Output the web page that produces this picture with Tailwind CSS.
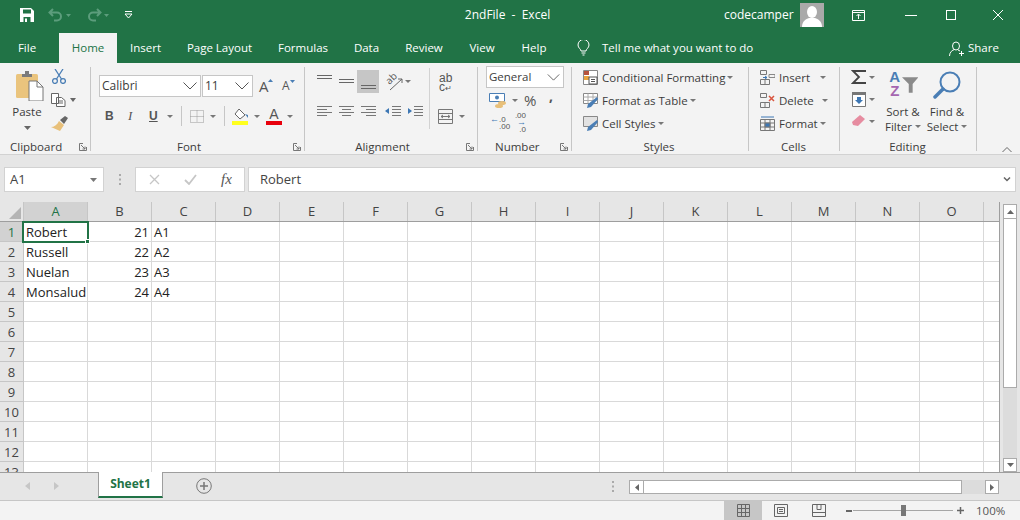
<!DOCTYPE html>
<html lang="en">
<head>
<meta charset="UTF-8" />
<title>2ndFile - Excel</title>
<script src="https://cdn.jsdelivr.net/npm/@tailwindcss/browser@4"></script>
</head>
<body class="w-[1020px] h-[520px] overflow-hidden bg-[#e6e6e6] font-['Open_Sans',sans-serif] text-[#333]">

<!-- Title bar -->
<header class="h-[30px] bg-[#217346] flex items-center text-white">
  <svg class="ml-[20px] w-[14px] h-[14px]" viewBox="0 0 14 14"><path d="M0 0h11l3 3v11H0z" fill="#fff"/><path d="M3 1.500h8v4H3zM3.500 9h7v5h-7z" fill="#217346"/><path d="M5 10.500h2V14H5z" fill="#fff"/></svg>
  <svg class="ml-[14px] w-[16px] h-[14px]" viewBox="0 0 16 14" fill="none" stroke="#5c9d7c" stroke-width="2"><path d="M5 1L1.500 4.500 5 8M2 4.500h7a4 4 0 0 1 0 8H6"/></svg>
  <svg class="ml-[2px] w-[5px] h-[3px]" viewBox="0 0 5 3"><path d="M0 0h5L2.500 3z" fill="#5c9d7c"/></svg>
  <svg class="ml-[15px] w-[16px] h-[14px]" viewBox="0 0 16 14" fill="none" stroke="#5c9d7c" stroke-width="2"><path d="M11 1l3.500 3.500L11 8M14 4.500H7a4 4 0 0 0 0 8h3"/></svg>
  <svg class="ml-[2px] w-[5px] h-[3px]" viewBox="0 0 5 3"><path d="M0 0h5L2.500 3z" fill="#5c9d7c"/></svg>
  <svg class="ml-[15px] w-[9px] h-[8px]" viewBox="0 0 9 8"><path d="M1 .5h7" stroke="#fff"/><path d="M1 3h7L4.500 7z" fill="none" stroke="#fff"/></svg>
  <div class="w-[343px] ml-[203px] text-center text-[12px]">2ndFile&nbsp; -&nbsp; Excel</div>
  <div class="w-[65px] ml-[45px] text-[12px] whitespace-nowrap">codecamper</div>
  <div class="ml-[11px] w-[24px] h-[24px] bg-[#a9a9a9] overflow-hidden">
    <svg class="w-[24px] h-[24px]" viewBox="0 0 24 24"><ellipse cx="12" cy="9" rx="5" ry="6" fill="#fff"/><path d="M2 24c0-6 4-8 7-9h6c3 1 7 3 7 9z" fill="#fff"/></svg>
  </div>
  <svg class="ml-[28px] w-[13px] h-[11px]" viewBox="0 0 13 11" fill="none" stroke="#fff"><path d="M.5.500h12v10H.500zM.5 2.500h12M6.500 9V4.500M4.500 6l2-2 2 2"/></svg>
  <div class="ml-[40px] w-[12px] h-px bg-white"></div>
  <div class="ml-[29px] w-[10px] h-[10px] border border-white"></div>
  <svg class="ml-[36px] w-[12px] h-[12px]" viewBox="0 0 12 12" stroke="#fff"><path d="M1 1l10 10M11 1L1 11"/></svg>
</header>

<!-- Tabs -->
<nav class="h-[33px] bg-[#217346] flex items-end text-white text-[11.500px] leading-[30px]">
  <div class="w-[54px] text-center h-[30px]">File</div>
  <div class="ml-[5px] w-[58px] text-center h-[30px] bg-[#f3f3f3] text-[#217346]">Home</div>
  <div class="w-[57px] text-center h-[30px]">Insert</div>
  <div class="w-[91px] text-center h-[30px]">Page Layout</div>
  <div class="w-[76px] text-center h-[30px]">Formulas</div>
  <div class="w-[51px] text-center h-[30px]">Data</div>
  <div class="w-[64px] text-center h-[30px]">Review</div>
  <div class="w-[52px] text-center h-[30px]">View</div>
  <div class="w-[52px] text-center h-[30px]">Help</div>
  <div class="h-[30px] flex items-center ml-[17px]">
    <svg class="w-[13px] h-[16px]" viewBox="0 0 13 16" fill="none" stroke="#fff"><path d="M4 11c0-2-3-3-3-6a5.500 5.500 0 0 1 11 0c0 3-3 4-3 6zM4.500 13h4M5.500 15h2"/></svg>
    <span class="ml-[12px] w-[150px] whitespace-nowrap">Tell me what you want to do</span>
  </div>
  <div class="h-[30px] flex items-center ml-[197px]">
    <svg class="w-[15px] h-[15px]" viewBox="0 0 15 15" fill="none" stroke="#fff"><ellipse cx="7" cy="5" rx="3.500" ry="4"/><path d="M.5 15c0-4 3-6 5-6.500M9 9l2 1M10 12.500h5M12.500 10v5"/></svg>
    <span class="ml-[4px]">Share</span>
  </div>
</nav>

<!-- Ribbon -->
<section class="h-[92px] bg-[#f3f3f3] border-b border-[#d2d2d2] flex items-start pt-[4px] text-[11.500px] leading-[16px] text-[#3c3c3c]">

  <!-- Clipboard -->
  <div class="w-[91px] h-[84px] border-r border-[#c6c6c6] flex flex-col">
    <div class="h-[70px] flex">
      <div class="w-[50px] flex flex-col items-center">
        <svg class="mt-[4px] ml-[8px] w-[29px] h-[30px]" viewBox="0 0 29 30"><rect x="1" y="3" width="22" height="24" rx="1.500" fill="#eac47d"/><path d="M7 3h3V0h4v3h3v3H7z" fill="#7b7b7b"/><path d="M14 10h8l6 6v14H14z" fill="#fff" stroke="#777"/><path d="M22 10v6h6" fill="none" stroke="#777"/></svg>
        <span class="mt-[3px] ml-[4px]">Paste</span>
        <svg class="mt-[6px] ml-[4px] w-[7px] h-[4px]" viewBox="0 0 7 4"><path d="M0 0h7L3.500 4z" fill="#666"/></svg>
      </div>
      <div class="flex flex-col">
        <svg class="mt-[2px] ml-[2px] w-[14px] h-[15px]" viewBox="0 0 14 15" fill="none" stroke="#4a7eb5" stroke-width="1.300"><path d="M3 0l6.500 10M11 0L4.500 10"/><circle cx="3" cy="12" r="2.400"/><circle cx="11" cy="12" r="2.400"/></svg>
        <div class="mt-[9px] flex items-center">
          <svg class="ml-[1px] w-[15px] h-[14px]" viewBox="0 0 15 14" fill="#fff" stroke="#666"><path d="M.5.500h7v10h-7zM5.500 4.500h5l3.500 3v6h-8.500z"/><path d="M7 8h5M7 10h5" /></svg>
          <svg class="ml-[4px] w-[6px] h-[4px]" viewBox="0 0 6 4"><path d="M0 0h6L3 4z" fill="#666"/></svg>
        </div>
        <svg class="mt-[9px] w-[18px] h-[15px]" viewBox="0 0 18 15"><path d="M9 5l5 4-4 6-9-4c3 0 6-2 8-6z" fill="#e8c07a"/><path d="M10 4l5-4 3 2-4 6z" fill="#666"/></svg>
      </div>
    </div>
    <div class="mt-[3px] flex items-center pl-[10px] leading-[14px] -mb-[3px]">
      <span class="w-[69px]">Clipboard</span>
      <svg class="w-[8px] h-[8px]" viewBox="0 0 8 8" fill="none" stroke="#777"><path d="M7.500 4v3.500H.5V.5H4M2 2l4 4M6 3.500V6H3.500"/></svg>
    </div>
  </div>

  <!-- Font -->
  <div class="w-[214px] h-[84px] border-r border-[#c6c6c6] flex flex-col">
    <div class="mt-[8px] h-[22px] flex items-center text-[12px]">
      <div class="ml-[8px] w-[102px] h-[22px] bg-white border border-[#c6c6c6] flex items-center justify-between px-[2px]">
        <span>Calibri</span>
        <svg class="mr-[1px] w-[14px] h-[8px]" viewBox="0 0 14 8" fill="none" stroke="#555"><path d="M.5.500L7 7l6.500-6.500"/></svg>
      </div>
      <div class="ml-[1px] w-[51px] h-[22px] bg-white border border-[#c6c6c6] flex items-center justify-between px-[2px]">
        <span>11</span>
        <svg class="mr-[1px] w-[14px] h-[8px]" viewBox="0 0 14 8" fill="none" stroke="#555"><path d="M.5.500L7 7l6.500-6.500"/></svg>
      </div>
      <div class="ml-[6px] w-[14px] text-[15px] text-[#555] leading-none flex items-start">A<svg class="-ml-[1px] w-[5px] h-[3px]" viewBox="0 0 5 3"><path d="M0 3h5L2.500 0z" fill="#4a7eb5"/></svg></div>
      <div class="ml-[9px] w-[14px] text-[12px] text-[#555] leading-none flex items-start">A<svg class="w-[5px] h-[3px]" viewBox="0 0 5 3"><path d="M0 0h5L2.500 3z" fill="#4a7eb5"/></svg></div>
    </div>
    <div class="mt-[10px] h-[18px] flex items-center text-[#555]">
      <span class="ml-[14px] w-[9px] font-bold text-[12px] font-['Liberation_Sans',sans-serif]">B</span>
      <span class="ml-[14px] w-[8px] italic text-[13px] font-['Liberation_Serif',serif]">I</span>
      <span class="ml-[13px] w-[9px] underline font-bold text-[12px] font-['Liberation_Sans',sans-serif]">U</span>
      <svg class="ml-[9px] w-[6px] h-[3px]" viewBox="0 0 6 3"><path d="M0 0h6L3 3z" fill="#777"/></svg>
      <div class="ml-[8px] w-px h-[20px] bg-[#c6c6c6]"></div>
      <svg class="ml-[8px] w-[14px] h-[13px]" viewBox="0 0 14 13" fill="none" stroke="#999" stroke-dasharray="1 1"><path d="M.5.500h13v12H.500zM.5 6.500h13M7 .5v12"/></svg>
      <svg class="ml-[6px] w-[6px] h-[3px]" viewBox="0 0 6 3"><path d="M0 0h6L3 3z" fill="#777"/></svg>
      <div class="ml-[8px] w-px h-[20px] bg-[#c6c6c6]"></div>
      <svg class="ml-[7px] w-[17px] h-[17px]" viewBox="0 0 17 17"><path d="M7 1l6 6-5 4-5-5z" fill="#fff" stroke="#666"/><path d="M13 6l3 1v3z" fill="#4a7eb5"/><path d="M0 13h16v4H0z" fill="#ffff1e"/></svg>
      <svg class="ml-[5px] w-[6px] h-[3px]" viewBox="0 0 6 3"><path d="M0 0h6L3 3z" fill="#777"/></svg>
      <div class="ml-[6px] w-[16px] h-[17px] flex flex-col items-center">
        <span class="h-[13px] text-[14px] leading-[13px] text-[#555] font-['Liberation_Sans',sans-serif]">A</span>
        <div class="w-[16px] h-[4px] bg-[#e8000c]"></div>
      </div>
      <svg class="ml-[5px] w-[6px] h-[3px]" viewBox="0 0 6 3"><path d="M0 0h6L3 3z" fill="#777"/></svg>
    </div>
    <div class="mt-auto flex items-center leading-[14px] -mb-[3px]">
      <span class="ml-[16px] w-[164px] text-center">Font</span>
      <svg class="ml-[22px] w-[8px] h-[8px]" viewBox="0 0 8 8" fill="none" stroke="#777"><path d="M7.500 4v3.500H.5V.5H4M2 2l4 4M6 3.500V6H3.500"/></svg>
    </div>
  </div>

  <!-- Alignment -->
  <div class="w-[173px] h-[84px] border-r border-[#c6c6c6] flex flex-col">
    <div class="h-[62px] flex">
      <div class="w-[125px] border-r border-[#d2d2d2] h-[61px] mt-[1px]">
        <div class="mt-[2px] h-[23px] flex items-center">
          <svg class="ml-[12px] w-[15px] h-[23px]" viewBox="0 0 15 23" stroke="#666"><path d="M0 5.500h15M0 8.500h15"/></svg>
          <svg class="ml-[7px] w-[15px] h-[23px]" viewBox="0 0 15 23" stroke="#666"><path d="M0 9.500h15M0 12.500h15"/></svg>
          <div class="ml-[3px] w-[22px] h-[23px] bg-[#c6c6c6] flex justify-center"><svg class="w-[15px] h-[23px]" viewBox="0 0 15 23" stroke="#666"><path d="M0 15.500h15M0 18.500h15"/></svg></div>
          <div class="relative ml-[6px] w-[18px] h-[18px]">
            <span class="absolute left-0 top-[-2px] text-[10px] leading-[14px] text-[#555] -rotate-45">ab</span>
            <svg class="absolute left-0 top-0 w-[18px] h-[18px]" viewBox="0 0 18 18" fill="none" stroke="#666"><path d="M5 17L17 6M13 6h4v4"/></svg>
          </div>
          <svg class="ml-[2px] w-[6px] h-[3px]" viewBox="0 0 6 3"><path d="M0 0h6L3 3z" fill="#777"/></svg>
        </div>
        <div class="mt-[10px] h-[16px] flex items-center">
          <svg class="ml-[12px] w-[15px] h-[13px]" viewBox="0 0 15 13" stroke="#777"><path d="M0 1.500h15M0 4.500h10M0 7.500h15M0 10.500h10"/></svg>
          <svg class="ml-[7px] w-[15px] h-[13px]" viewBox="0 0 15 13" stroke="#777"><path d="M0 1.500h15M3 4.500h9M0 7.500h15M3 10.500h9"/></svg>
          <svg class="ml-[7px] w-[15px] h-[13px]" viewBox="0 0 15 13" stroke="#777"><path d="M0 1.500h15M5 4.500h10M0 7.500h15M5 10.500h10"/></svg>
          <svg class="ml-[9px] w-[16px] h-[13px]" viewBox="0 0 16 13"><path d="M7 1.500h9M7 4.500h9M7 7.500h9M7 10.500h9" stroke="#777"/><path d="M0 6l4-3v6z" fill="#3d77b4"/></svg>
          <svg class="ml-[6px] w-[16px] h-[13px]" viewBox="0 0 16 13"><path d="M7 1.500h9M7 4.500h9M7 7.500h9M7 10.500h9" stroke="#777"/><path d="M5 6L1 3v6z" fill="#3d77b4"/></svg>
        </div>
      </div>
      <div class="flex-1 flex flex-col">
        <div class="mt-[7px] ml-[9px] w-[15px] text-[12px] leading-[9px] text-[#555] font-['Liberation_Sans',sans-serif]">ab<br>c<span class="text-[8px] leading-[8px]">↵</span></div>
        <div class="mt-[16px] ml-[8px] flex items-center">
          <svg class="w-[15px] h-[15px]" viewBox="0 0 15 15" fill="none" stroke="#777"><path d="M.5.500h14v14H.500zM.5 4.500h14M.5 10.500h14M3 7.500h9M5 6L3 7.500 5 9M10 6l2 1.500L10 9"/></svg>
          <svg class="ml-[6px] w-[6px] h-[3px]" viewBox="0 0 6 3"><path d="M0 0h6L3 3z" fill="#777"/></svg>
        </div>
      </div>
    </div>
    <div class="mt-auto flex items-center leading-[14px] -mb-[3px]">
      <span class="ml-[50px] w-[55px] text-center whitespace-nowrap">Alignment</span>
      <svg class="ml-[56px] w-[8px] h-[8px]" viewBox="0 0 8 8" fill="none" stroke="#777"><path d="M7.500 4v3.500H.5V.5H4M2 2l4 4M6 3.500V6H3.500"/></svg>
    </div>
  </div>

  <!-- Number -->
  <div class="w-[94px] h-[84px] border-r border-[#c6c6c6] flex flex-col">
    <div class="ml-[8px] mt-[-1px] w-[78px] h-[22px] bg-white border border-[#c6c6c6] flex items-center justify-between px-[2px]">
      <span>General</span>
      <svg class="mr-[1px] w-[13px] h-[7px]" viewBox="0 0 14 8" fill="none" stroke="#555"><path d="M.5.500L7 7l6.500-6.500"/></svg>
    </div>
    <div class="mt-[4px] h-[16px] flex items-center">
      <svg class="ml-[11px] w-[21px] h-[16px]" viewBox="0 0 21 16"><path d="M.5 1.500h15v8H.500z" fill="#fff" stroke="#4a7eb5"/><circle cx="8" cy="5.500" r="2" fill="#4a7eb5"/><ellipse cx="13" cy="11" rx="4" ry="2" fill="#e8c07a"/><ellipse cx="10" cy="14" rx="4" ry="2" fill="#e8c07a"/></svg>
      <svg class="ml-[2px] w-[6px] h-[3px]" viewBox="0 0 6 3"><path d="M0 0h6L3 3z" fill="#777"/></svg>
      <span class="ml-[6px] w-[14px] text-[15px] text-[#555] leading-none">%</span>
      <span class="ml-[11px] mb-[8px] text-[14px] font-bold text-[#555] leading-none">,</span>
    </div>
    <div class="mt-[7px] h-[15px] flex items-center text-[#555] text-[8px] leading-[7px] font-['Liberation_Sans',sans-serif]">
      <div class="ml-[12px] w-[14px] flex"><span class="text-[#3d77b4] text-[9px]">←</span><span>.0<br>.00</span></div>
      <div class="ml-[7px] w-[15px] flex flex-wrap justify-end"><span class="w-full text-right">.00</span><span class="text-[#3d77b4] text-[9px]">→</span><span>.0</span></div>
    </div>
    <div class="mt-auto flex items-center leading-[14px] -mb-[3px]">
      <span class="ml-[17px] w-[42px] text-center">Number</span>
      <svg class="ml-[23px] w-[8px] h-[8px]" viewBox="0 0 8 8" fill="none" stroke="#777"><path d="M7.500 4v3.500H.5V.5H4M2 2l4 4M6 3.500V6H3.500"/></svg>
    </div>
  </div>

  <!-- Styles -->
  <div class="w-[177px] h-[84px] border-r border-[#c6c6c6] flex flex-col">
    <div class="mt-[-1px] h-[23px] flex items-center">
      <svg class="ml-[11px] w-[15px] h-[15px]" viewBox="0 0 15 15"><path d="M.5.500h14v14H.500z" fill="#fff" stroke="#888"/><path d="M1 1h5v4H1z" fill="#b5533c"/><path d="M1 6h5v4H1z" fill="#e8a33d"/><path d="M6 7h8v7H6z" fill="#fff" stroke="#555"/><path d="M8 9.500h4M8 11.500h4" stroke="#555"/></svg>
      <span class="ml-[4px] whitespace-nowrap">Conditional Formatting</span>
      <svg class="ml-[2px] w-[6px] h-[3px]" viewBox="0 0 6 3"><path d="M0 0h6L3 3z" fill="#777"/></svg>
    </div>
    <div class="h-[23px] flex items-center">
      <svg class="ml-[11px] w-[15px] h-[15px]" viewBox="0 0 15 15"><path d="M.5.500h14v10H.500z" fill="#fff" stroke="#888"/><path d="M5 .5v10M10 .5v10M.5 4h14M.5 7.500h14" stroke="#aaa"/><path d="M14 4l1 2-7 8-4 1 1-4z" fill="#4a7eb5"/></svg>
      <span class="ml-[4px] whitespace-nowrap">Format as Table</span>
      <svg class="ml-[2px] w-[6px] h-[3px]" viewBox="0 0 6 3"><path d="M0 0h6L3 3z" fill="#777"/></svg>
    </div>
    <div class="h-[23px] flex items-center">
      <svg class="ml-[11px] w-[15px] h-[15px]" viewBox="0 0 15 15"><path d="M.5.500h14v10H.500z" fill="#e2e2e2" stroke="#888"/><path d="M14 4l1 2-7 8-4 1 1-4z" fill="#4a7eb5"/></svg>
      <span class="ml-[4px] whitespace-nowrap">Cell Styles</span>
      <svg class="ml-[2px] w-[6px] h-[3px]" viewBox="0 0 6 3"><path d="M0 0h6L3 3z" fill="#777"/></svg>
    </div>
    <div class="mt-auto text-center leading-[14px] -mb-[3px] pr-[2px]">Styles</div>
  </div>

  <!-- Cells -->
  <div class="w-[91px] h-[84px] border-r border-[#c6c6c6] flex flex-col">
    <div class="mt-[-1px] h-[23px] flex items-center">
      <svg class="ml-[11px] w-[15px] h-[15px]" viewBox="0 0 15 15" fill="none" stroke="#777"><path d="M.5.500h6v4h-6zM.5 9.500h9v5h-9zM5 9.500v5"/><path d="M9 4.500h6v3H9z" stroke="#888"/><path d="M3 7.500h4M5 6l2 1.500L5 9" stroke="#3d77b4"/></svg>
      <span class="ml-[4px]">Insert</span>
      <svg class="ml-[10px] w-[6px] h-[3px]" viewBox="0 0 6 3"><path d="M0 0h6L3 3z" fill="#777"/></svg>
    </div>
    <div class="h-[23px] flex items-center">
      <svg class="ml-[11px] w-[15px] h-[15px]" viewBox="0 0 15 15" fill="none" stroke="#777"><path d="M.5.500h6v4h-6zM.5 9.500h9v5h-9zM5 9.500v5"/><path d="M9 3l5 5M14 3L9 8" stroke="#d9553f" stroke-width="1.500"/></svg>
      <span class="ml-[4px]">Delete</span>
      <svg class="ml-[8px] w-[6px] h-[3px]" viewBox="0 0 6 3"><path d="M0 0h6L3 3z" fill="#777"/></svg>
    </div>
    <div class="h-[23px] flex items-center">
      <svg class="ml-[11px] w-[15px] h-[15px]" viewBox="0 0 15 15" fill="none" stroke="#777"><path d="M.5 3.500h14v11H.500zM.5 7h14M.5 11h14M5 3.500v11M10 3.500v11"/><path d="M5 7h5v4H5z" fill="#3d77b4"/><path d="M1 1h13" stroke="#3d77b4"/></svg>
      <span class="ml-[4px]">Format</span>
      <svg class="ml-[2px] w-[6px] h-[3px]" viewBox="0 0 6 3"><path d="M0 0h6L3 3z" fill="#777"/></svg>
    </div>
    <div class="mt-auto text-center leading-[14px] -mb-[3px] pr-[1px]">Cells</div>
  </div>

  <!-- Editing -->
  <div class="w-[137px] h-[84px] border-r border-[#c6c6c6] flex flex-col">
    <div class="h-[70px] flex">
      <div class="w-[41px] flex flex-col">
        <div class="mt-[2px] h-[16px] flex items-center">
          <svg class="ml-[11px] w-[15px] h-[14px]" viewBox="0 0 15 14" fill="none" stroke="#444" stroke-width="1.800"><path d="M15 1H2l6 6-6 6h13"/></svg>
          <svg class="ml-[3px] w-[6px] h-[3px]" viewBox="0 0 6 3"><path d="M0 0h6L3 3z" fill="#777"/></svg>
        </div>
        <div class="mt-[6px] h-[16px] flex items-center">
          <svg class="ml-[12px] w-[14px] h-[15px]" viewBox="0 0 14 15"><path d="M.5.500h13v14H.500z" fill="#fff" stroke="#777"/><path d="M0 0h14v3H0z" fill="#777"/><path d="M5 5h4v3h2l-4 4-4-4h2z" fill="#3d77b4"/></svg>
          <svg class="ml-[3px] w-[6px] h-[3px]" viewBox="0 0 6 3"><path d="M0 0h6L3 3z" fill="#777"/></svg>
        </div>
        <div class="mt-[7px] h-[14px] flex items-center">
          <svg class="ml-[12px] w-[13px] h-[12px]" viewBox="0 0 13 12"><path d="M8 0l5 4-7 7-5-1-1-3z" fill="#e68ca0"/></svg>
          <svg class="ml-[4px] w-[6px] h-[3px]" viewBox="0 0 6 3"><path d="M0 0h6L3 3z" fill="#777"/></svg>
        </div>
      </div>
      <div class="w-[44px] flex flex-col items-center">
        <div class="mt-[3px] w-[30px] h-[28px] flex items-start">
          <div class="w-[14px] text-[15px] leading-[14px] font-bold font-['Liberation_Sans',sans-serif] text-center"><span class="text-[#4a7eb5]">A</span><br><span class="text-[#a566b0]">Z</span></div>
          <svg class="mt-[7px] w-[17px] h-[16px]" viewBox="0 0 17 16"><path d="M0 0h17l-6 7v9H7V7z" fill="#8a8a8a"/></svg>
        </div>
        <div class="mt-[6px] text-center leading-[15px] whitespace-nowrap">Sort &amp;<br>Filter<svg class="inline ml-[3px] mb-[2px] w-[6px] h-[3px]" viewBox="0 0 6 3"><path d="M0 0h6L3 3z" fill="#777"/></svg></div>
      </div>
      <div class="w-[44px] flex flex-col items-center">
        <svg class="mt-[4px] w-[28px] h-[28px]" viewBox="0 0 28 28" fill="none"><circle cx="17" cy="11" r="9.500" stroke="#4a7eb5" stroke-width="2"/><path d="M10 18l-8 8" stroke="#4a7eb5" stroke-width="3.500" stroke-linecap="round"/></svg>
        <div class="mt-[5px] text-center leading-[15px] whitespace-nowrap">Find &amp;<br>Select<svg class="inline ml-[3px] mb-[2px] w-[6px] h-[3px]" viewBox="0 0 6 3"><path d="M0 0h6L3 3z" fill="#777"/></svg></div>
      </div>
    </div>
    <div class="mt-auto text-center leading-[14px] -mb-[3px] pr-[1px]">Editing</div>
  </div>

  <div class="flex-1 h-[84px] flex items-end justify-end pr-[8px]">
    <svg class="w-[10px] h-[5px] mb-[-1px]" viewBox="0 0 10 5" fill="none" stroke="#666"><path d="M.5 5L5 .5 9.500 5"/></svg>
  </div>
</section>

<!-- Formula bar -->
<section class="h-[47px] pt-[12px] flex items-start text-[13px] text-[#444]">
  <div class="ml-[4px] w-[100px] h-[25px] bg-white border border-[#d2d2d2] flex items-center justify-between pl-[5px] pr-[6px]">
    <span>A1</span>
    <svg class="w-[7px] h-[4px]" viewBox="0 0 7 4"><path d="M0 0h7L3.500 4z" fill="#777"/></svg>
  </div>
  <svg class="ml-[15px] mt-[7px] w-[2px] h-[11px]" viewBox="0 0 2 11" fill="#aaa"><path d="M0 0h2v2H0zM0 4.500h2v2H0zM0 9h2v2H0z"/></svg>
  <div class="ml-[14px] w-[110px] h-[25px] bg-white border border-[#d2d2d2] flex items-center">
    <svg class="ml-[13px] w-[11px] h-[11px]" viewBox="0 0 11 11" stroke="#c6c6c6" stroke-width="1.300"><path d="M1 1l9 9M10 1l-9 9"/></svg>
    <svg class="ml-[24px] w-[13px] h-[11px]" viewBox="0 0 13 11" fill="none" stroke="#c6c6c6" stroke-width="1.800"><path d="M1 6l4 4 7-9"/></svg>
    <span class="ml-[24px] italic text-[15px] text-[#555] font-['Liberation_Serif',serif]">fx</span>
  </div>
  <div class="ml-[3px] w-[768px] h-[25px] bg-white border border-[#d2d2d2] flex items-center justify-between pl-[11px] pr-[4px]">
    <span>Robert</span>
    <svg class="w-[8px] h-[5px]" viewBox="0 0 8 5" fill="none" stroke="#666" stroke-width="1.500"><path d="M1 .5l3 3 3-3"/></svg>
  </div>
</section>

<!-- Sheet -->
<main class="h-[270px] flex items-start overflow-hidden">
  <div class="relative w-[1000px] h-[270px] overflow-hidden border-r border-[#9e9e9e]">
    <div id="grid" class="text-[13px] leading-[20px]"></div>
    <!-- active cell -->
    <div class="absolute left-[22px] top-[19px] w-[67px] h-[22px] border-2 border-[#217346]"></div>
    <div class="absolute left-[85px] top-[37px] w-[5px] h-[5px] bg-[#217346] border border-white"></div>
  </div>
  <div class="ml-[3px] w-[14px] h-[270px] flex flex-col bg-[#dcdcdc] mt-[2px]">
    <div class="h-[15px] bg-white border border-[#ababab] flex items-center justify-center"><svg class="w-[7px] h-[4px]" viewBox="0 0 7 4"><path d="M0 4h7L3.500 0z" fill="#666"/></svg></div>
    <div class="h-[169px] bg-white border-x border-b border-[#ababab]"></div>
    <div class="flex-1"></div>
    <div class="h-[14px] mb-[2px] bg-white border border-[#ababab] flex items-center justify-center"><svg class="w-[7px] h-[4px]" viewBox="0 0 7 4"><path d="M0 0h7L3.500 4z" fill="#666"/></svg></div>
  </div>
</main>

<!-- Sheet tabs -->
<section class="h-[28px] bg-[#e6e6e6] border-t border-[#9e9e9e] flex items-start">
  <svg class="ml-[25px] mt-[9px] w-[5px] h-[8px]" viewBox="0 0 5 8"><path d="M5 0v8L0 4z" fill="#c6c6c6"/></svg>
  <svg class="ml-[24px] mt-[9px] w-[5px] h-[8px]" viewBox="0 0 5 8"><path d="M0 0v8l5-4z" fill="#c6c6c6"/></svg>
  <div class="ml-[39px] -mt-px w-[65px] h-[26px] bg-white border-x border-[#9e9e9e] border-b-2 border-b-[#217346] text-center text-[12px] leading-[24px] font-bold text-[#217346]">Sheet1</div>
  <svg class="ml-[33px] mt-[5px] w-[16px] h-[16px]" viewBox="0 0 16 16" fill="none" stroke="#777"><circle cx="8" cy="8" r="7.300"/><path d="M8 4v8M4 8h8" stroke-width="1.500"/></svg>
  <svg class="ml-[400px] mt-[8px] w-[2px] h-[11px]" viewBox="0 0 2 11" fill="#aaa"><path d="M0 0h2v2H0zM0 4.500h2v2H0zM0 9h2v2H0z"/></svg>
  <div class="ml-[15px] mt-[7px] w-[370px] h-[14px] bg-[#dcdcdc] flex">
    <div class="w-[15px] h-[14px] bg-white border border-[#ababab] flex items-center justify-center"><svg class="w-[4px] h-[7px]" viewBox="0 0 4 7"><path d="M4 0v7L0 3.500z" fill="#666"/></svg></div>
    <div class="w-[318px] h-[14px] bg-white border-y border-r border-[#ababab]"></div>
    <div class="ml-auto w-[14px] h-[14px] bg-white border border-[#ababab] flex items-center justify-center"><svg class="w-[4px] h-[7px]" viewBox="0 0 4 7"><path d="M0 0v7l4-3.500z" fill="#666"/></svg></div>
  </div>
</section>

<!-- Status bar -->
<footer class="h-[20px] bg-[#f3f3f3] border-t border-[#c6c6c6] flex items-center text-[11.500px] text-[#555]">
  <div class="ml-[724px] w-[38px] h-[19px] bg-[#c6c6c6] flex items-center justify-center">
    <svg class="w-[13px] h-[13px]" viewBox="0 0 13 13" fill="none" stroke="#666"><path d="M.5.500h12v12H.500zM4.500.5v12M8.500.5v12M.5 4.500h12M.5 8.500h12"/></svg>
  </div>
  <svg class="ml-[12px] w-[14px] h-[13px]" viewBox="0 0 14 13" fill="none" stroke="#666"><path d="M.5.500h13v12H.500zM3.500 3.500h7v6h-7zM5 5.500h4M5 7.500h4"/></svg>
  <svg class="ml-[24px] w-[14px] h-[13px]" viewBox="0 0 14 13" fill="none" stroke="#666"><path d="M.5.500h13v12H.500zM.5 8.500h13M5 .5v5h4v-5"/></svg>
  <div class="ml-[20px] w-[6px] h-[2px] bg-[#666]"></div>
  <div class="ml-[1px] w-[100px] h-px bg-[#a6a6a6] flex items-center">
    <div class="ml-[48px] w-[5px] h-[11px] bg-[#777]"></div>
  </div>
  <svg class="ml-[4px] w-[7px] h-[7px]" viewBox="0 0 7 7" stroke="#666" stroke-width="1.500"><path d="M0 3.500h7M3.500 0v7"/></svg>
  <span class="ml-[12px]">100%</span>
</footer>

<script>
  // column letters + rows, the sheet is too repetitive to write by hand
  // last column (P) is cut off by the window so its letter never shows
  const cols = [..."ABCDEFGHIJKLMNO", ""];
  const data = {
    1: ["Robert", "21", "A1"],
    2: ["Russell", "22", "A2"],
    3: ["Nuelan", "23", "A3"],
    4: ["Monsalud", "24", "A4"]
  };
  let html = '<div class="h-[20px] flex bg-[#e6e6e6] border-b border-[#9e9e9e] leading-[19px] text-[#444]">';
  html += '<div class="w-[24px] h-[19px] shrink-0 flex items-end justify-end border-r border-[#c6c6c6] pr-[2px] pb-[2px]"><svg class="w-[12px] h-[12px]" viewBox="0 0 12 12"><path d="M12 0v12H0z" fill="#b4b4b4"/></svg></div>';
  cols.forEach((c, i) => {
    const bg = i === 0 ? "bg-[#d2d2d2] text-[#217346]" : "";
    html += `<div class="w-[64px] h-[19px] shrink-0 text-center border-r border-[#c6c6c6] ${bg}">${c}</div>`;
  });
  html += '</div>';
  for (let r = 1; r <= 13; r++) {
    const row = data[r] || ["", "", ""];
    const head = r === 1 ? "bg-[#d2d2d2] text-[#217346]" : "bg-[#e6e6e6] text-[#444]";
    html += '<div class="h-[20px] flex bg-white">';
    html += `<div class="w-[24px] h-[20px] shrink-0 text-center border-r border-b border-[#c6c6c6] ${head}">${r}</div>`;
    cols.forEach((c, i) => {
      const align = i === 1 ? "text-right pr-[2px]" : "pl-[2px]";
      const val = i < 3 ? row[i] : "";
      html += `<div class="w-[64px] h-[20px] shrink-0 whitespace-nowrap overflow-hidden border-r border-b border-[#d9d9d9] text-[#222] ${align}">${val}</div>`;
    });
    html += '</div>';
  }
  document.getElementById("grid").innerHTML = html;
</script>
</body>
</html>
